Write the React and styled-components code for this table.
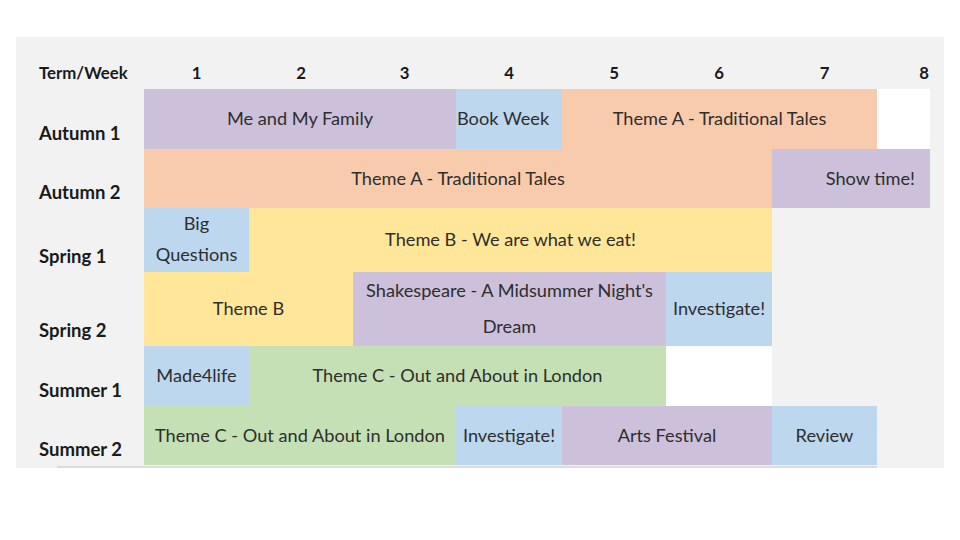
import React from "react";
import styled, { createGlobalStyle } from "styled-components";

const GlobalStyle = createGlobalStyle`
  body {
    margin: 0;
    background: #ffffff;
    font-family: Lato, "Open Sans", sans-serif;
  }
`;

const colours = {
  purple: "#ccc0da",
  blue: "#bdd7ee",
  orange: "#f8cbad",
  yellow: "#ffe699",
  green: "#c5e0b4",
  white: "#ffffff",
};

const Panel = styled.div`
  margin: 37px 0 0 16px;
  width: 928px;
  background: #f2f2f2;
  display: flex;
  flex-direction: column;
`;

const Grid = styled.div`
  display: grid;
  grid-template-columns: 128px 105px 104px 103px 106px 104px 106px 105px 53px 14px;
  grid-template-rows: 52px 60px 59px 64px 74px 60px 59px;
`;

const Rule = styled.div`
  margin: 1px 0 0 41px;
  width: 820px;
  height: 2px;
  background: #dcdcdc;
`;

const HeadCell = styled.div`
  display: flex;
  align-items: flex-end;
  justify-content: ${(p) => (p.$end ? "flex-end" : p.$start ? "flex-start" : "center")};
  padding: 0 ${(p) => (p.$end ? "1px" : "0")} 6px ${(p) => (p.$start ? "23px" : "0")};
  font-size: 16.8px;
  font-weight: 700;
  color: #1a1a1a;
`;

const Label = styled.div`
  grid-column: 1;
  display: flex;
  align-items: flex-end;
  padding: 0 0 5px 23px;
  font-size: 18.5px;
  font-weight: 700;
  color: #1a1a1a;
`;

const Cell = styled.div`
  grid-column: span ${(p) => p.$span};
  background: ${(p) => colours[p.$tone] || "transparent"};
  display: flex;
  align-items: center;
  justify-content: ${(p) =>
    p.$align === "right" ? "flex-end" : p.$align === "left" ? "flex-start" : "center"};
  text-align: center;
  padding: 0 ${(p) => (p.$align === "right" ? "15px" : "1px")} 2px;
  font-size: 18.2px;
  line-height: ${(p) => p.$lh || "22px"};
  color: #2e2e2e;
  white-space: nowrap;
`;

const weeks = ["1", "2", "3", "4", "5", "6", "7"];

const terms = [
  {
    name: "Autumn 1",
    cells: [
      { text: "Me and My Family", span: 3, tone: "purple" },
      { text: "Book Week", span: 1, tone: "blue", align: "left" },
      { text: "Theme A - Traditional Tales", span: 3, tone: "orange" },
      { text: "", span: 1, tone: "white" },
    ],
  },
  {
    name: "Autumn 2",
    cells: [
      { text: "Theme A - Traditional Tales", span: 6, tone: "orange" },
      { text: "Show time!", span: 2, tone: "purple", align: "right" },
    ],
  },
  {
    name: "Spring 1",
    cells: [
      { text: ["Big", "Questions"], span: 1, tone: "blue", lh: "31px" },
      { text: "Theme B - We are what we eat!", span: 5, tone: "yellow" },
    ],
  },
  {
    name: "Spring 2",
    cells: [
      { text: "Theme B", span: 2, tone: "yellow" },
      { text: ["Shakespeare - A Midsummer Night's", "Dream"], span: 3, tone: "purple", lh: "36px" },
      { text: "Investigate!", span: 1, tone: "blue" },
    ],
  },
  {
    name: "Summer 1",
    cells: [
      { text: "Made4life", span: 1, tone: "blue" },
      { text: "Theme C - Out and About in London", span: 4, tone: "green" },
      { text: "", span: 1, tone: "white" },
    ],
  },
  {
    name: "Summer 2",
    cells: [
      { text: "Theme C - Out and About in London", span: 3, tone: "green" },
      { text: "Investigate!", span: 1, tone: "blue" },
      { text: "Arts Festival", span: 2, tone: "purple" },
      { text: "Review", span: 1, tone: "blue" },
    ],
  },
];

function CellText({ text }) {
  if (!Array.isArray(text)) return text;
  return (
    <span>
      {text.map((line, i) => (
        <React.Fragment key={i}>
          {i > 0 && <br />}
          {line}
        </React.Fragment>
      ))}
    </span>
  );
}

export default function App() {
  return (
    <>
      <GlobalStyle />
      <Panel>
        <Grid>
          <HeadCell $start>Term/Week</HeadCell>
          {weeks.map((w) => (
            <HeadCell key={w}>{w}</HeadCell>
          ))}
          <HeadCell $end>8</HeadCell>
          <div />
          {terms.map((term) => (
            <React.Fragment key={term.name}>
              <Label>{term.name}</Label>
              {term.cells.map((c, i) => (
                <Cell key={i} $span={c.span} $tone={c.tone} $align={c.align} $lh={c.lh}>
                  <CellText text={c.text} />
                </Cell>
              ))}
            </React.Fragment>
          ))}
        </Grid>
        <Rule />
      </Panel>
    </>
  );
}
